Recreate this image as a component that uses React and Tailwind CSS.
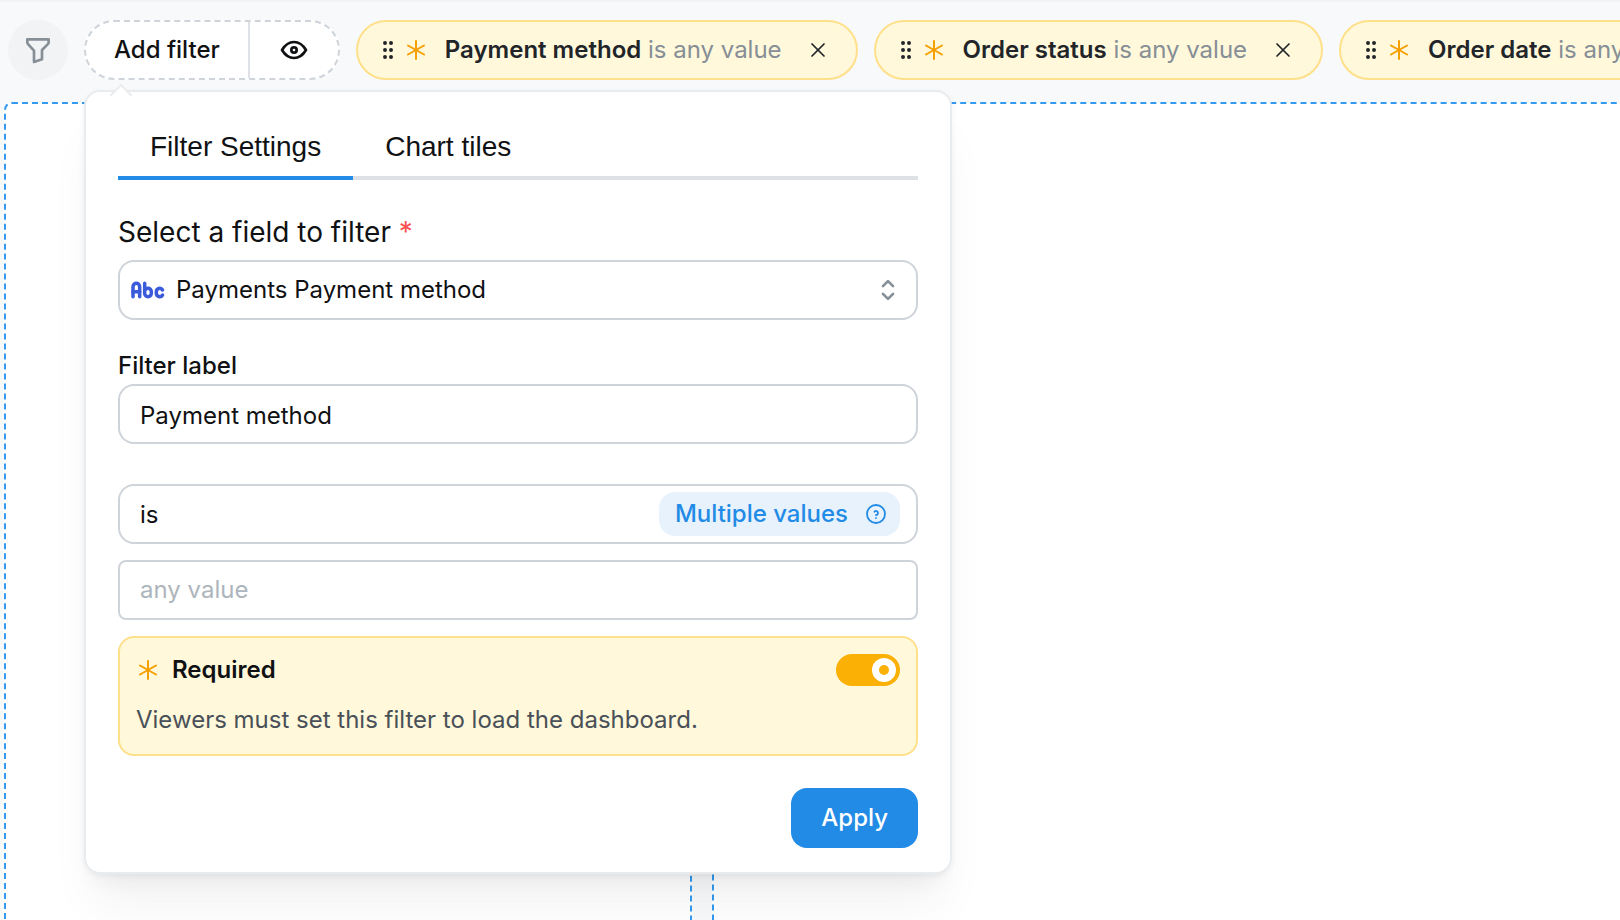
import { useState } from "react";
import { TbAbc, TbAsterisk, TbEye, TbFilter, TbGripVertical, TbHelpCircle, TbX } from "react-icons/tb";

const filters = ["Payment method", "Order status", "Order date"];

function FilterChip({ label }) {
  return (
    <div className="flex h-15 shrink-0 items-center rounded-full border-2 border-[#ffe08a] bg-[#fff8db] pr-[26px] pl-[18px] whitespace-nowrap">
      <TbGripVertical className="size-6 text-[#212529]" />
      <TbAsterisk className="ml-1 size-6 text-[#f59f00]" />
      <p className="ml-[17px] text-[#868e96]">
        <span className="font-semibold text-[#212529]">{label}</span> is any value
      </p>
      <button type="button" aria-label={`Remove ${label}`} className="ml-6 text-[#212529]">
        <TbX className="size-6" strokeWidth={1.7} />
      </button>
    </div>
  );
}

function Tab({ active, onClick, children }) {
  return (
    <button
      type="button"
      role="tab"
      aria-selected={active}
      onClick={onClick}
      className={`-mb-1 h-16 border-b-4 px-8 pt-0.5 font-['Liberation_Sans',Arial,sans-serif] text-[28px] ${
        active ? "border-[#228be6]" : "border-transparent"
      }`}
    >
      {children}
    </button>
  );
}

function SelectorIcon() {
  return (
    <svg
      viewBox="0 0 15 15"
      fill="none"
      stroke="#868e96"
      strokeWidth="1.1"
      strokeLinecap="round"
      strokeLinejoin="round"
      className="pointer-events-none absolute right-3 size-9"
    >
      <path d="M5.4 5.9 7.5 3.8l2.1 2.1M9.6 9.1 7.5 11.2 5.4 9.1" />
    </svg>
  );
}

function FilterPopover() {
  const [tab, setTab] = useState("settings");
  return (
    <div
      role="dialog"
      aria-label="Add filter"
      className="absolute top-full left-0 z-10 mt-2.5 w-[868px] rounded-2xl border-2 border-[#e9ecef] bg-white px-8 pt-6 pb-6 shadow-[0_2px_6px_rgba(0,0,0,0.05),0_40px_50px_-10px_rgba(0,0,0,0.05),0_20px_20px_-10px_rgba(0,0,0,0.04)]"
    >
      <span className="absolute -top-[5px] left-[27px] size-4 rotate-45 border-t-2 border-l-2 border-[#e9ecef] bg-white" />
      <div role="tablist" className="flex border-b-4 border-[#dee2e6]">
        <Tab active={tab === "settings"} onClick={() => setTab("settings")}>Filter Settings</Tab>
        <Tab active={tab === "tiles"} onClick={() => setTab("tiles")}>Chart tiles</Tab>
      </div>

      <label htmlFor="field" className="mt-8 block text-[28px] leading-10">
        Select a field to filter <span className="text-[#fa5252]">*</span>
      </label>
      <div className="relative mt-2 flex items-center">
        <TbAbc className="pointer-events-none absolute left-2.5 size-10 text-[#3b5bdb]" strokeWidth={2.1} />
        <select
          id="field"
          className="h-15 w-full appearance-none rounded-2xl border-2 border-[#ced4da] bg-white px-14"
        >
          <option>Payments Payment method</option>
        </select>
        <SelectorIcon />
      </div>

      <label htmlFor="label" className="mt-7 block leading-9 font-medium">Filter label</label>
      <input
        id="label"
        defaultValue="Payment method"
        className="block h-15 w-full rounded-2xl border-2 border-[#ced4da] bg-white px-5 pt-0.5"
      />

      <div className="relative mt-10 flex items-center">
        <select
          aria-label="Condition"
          className="h-15 w-full appearance-none rounded-2xl border-2 border-[#ced4da] bg-white px-5 pt-0.5"
        >
          <option>is</option>
        </select>
        <button
          type="button"
          className="absolute right-[18px] flex h-11 items-center gap-4 rounded-2xl bg-[#e7f2fc] pr-3 pl-4 font-medium text-[#228be6]"
        >
          Multiple values
          <TbHelpCircle className="size-6" strokeWidth={1.8} />
        </button>
      </div>
      <input
        aria-label="Value"
        placeholder="any value"
        className="mt-4 block h-15 w-full rounded-lg border-2 border-[#ced4da] bg-white px-5 pb-0.5 placeholder:text-[#adb5bd]"
      />

      <div className="mt-4 rounded-2xl border-2 border-[#ffe08a] bg-[#fff8db] px-4 pt-4 pb-3.5">
        <div className="flex items-center">
          <TbAsterisk className="size-6 text-[#f59f00]" />
          <label htmlFor="required" className="ml-3 font-semibold">Required</label>
          <input
            id="required"
            type="checkbox"
            role="switch"
            defaultChecked
            className="ml-auto flex h-8 w-16 appearance-none items-center rounded-full bg-[#ced4da] p-1 before:size-6 before:rounded-full before:border-[7px] before:border-white before:bg-[#ced4da] checked:justify-end checked:bg-[#fab005] checked:before:bg-[#fab005]"
          />
        </div>
        <p className="mt-3.5 leading-10 text-[#495057]">Viewers must set this filter to load the dashboard.</p>
      </div>

      <div className="mt-8 flex justify-end">
        <button type="button" className="h-15 rounded-2xl bg-[#228be6] px-[30px] font-medium text-white">Apply</button>
      </div>
    </div>
  );
}

export default function App() {
  return (
    <div className="flex h-screen flex-col overflow-hidden bg-[#f8f9fa] font-[Inter,sans-serif] text-2xl text-[#101113]">
      <header className="flex gap-4 border-t-2 border-[#f1f3f5] px-2 pt-[18px] pb-[22px]">
        <button
          type="button"
          aria-label="Filters"
          className="flex size-15 shrink-0 items-center justify-center rounded-full bg-[#f1f3f5] text-[#868e96]"
        >
          <TbFilter className="size-8" />
        </button>
        <div className="relative shrink-0">
          <div className="flex h-15 rounded-full border-2 border-dashed border-[#ced4da] bg-white">
            <button type="button" className="border-r-2 border-[#dee2e6] px-7 font-medium">Add filter</button>
            <button type="button" aria-label="Show filters" className="px-7">
              <TbEye className="size-8" />
            </button>
          </div>
          <FilterPopover />
        </div>
        {filters.map((label) => (
          <FilterChip key={label} label={label} />
        ))}
      </header>
      <main className="-mr-2 -mb-2 grid flex-1 grid-cols-[688px_1fr] gap-5 pl-1">
        <section aria-label="Tile 1" className="rounded-lg border-2 border-dashed border-[#339af0] bg-white" />
        <section aria-label="Tile 2" className="rounded-lg border-2 border-dashed border-[#339af0] bg-white" />
      </main>
    </div>
  );
}
